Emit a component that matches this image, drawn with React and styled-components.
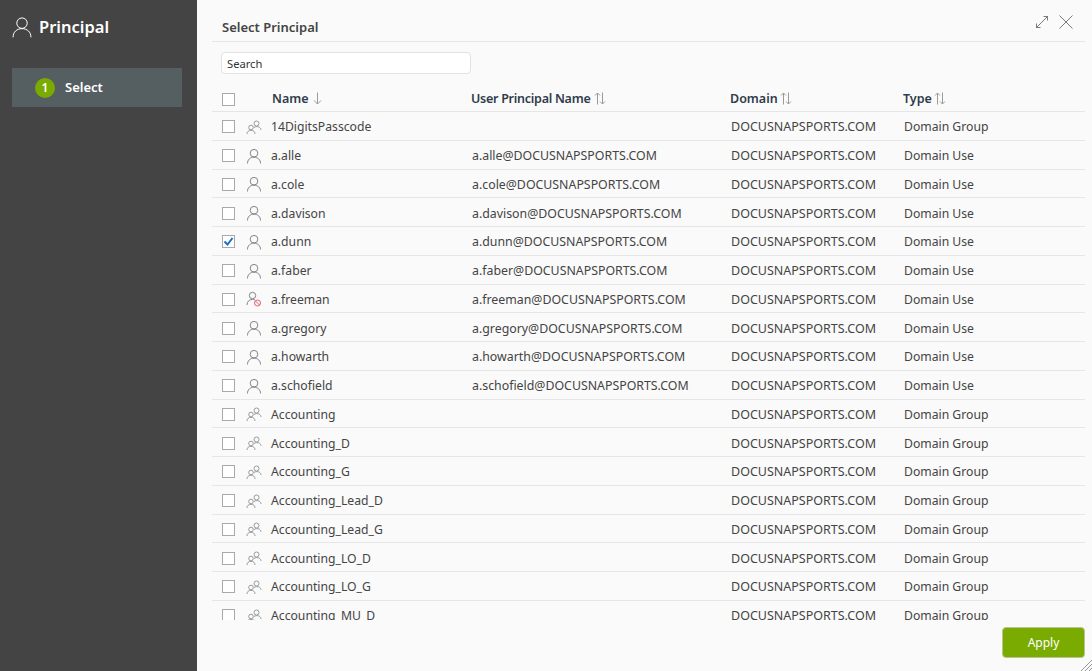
import React from "react";
import styled, { createGlobalStyle } from "styled-components";

const GlobalStyle = createGlobalStyle`
    html, body {
        margin: 0;
        padding: 0;
        height: 100%;
        overflow: hidden;
    }

    body {
        font-family: "Noto Sans", "Open Sans", sans-serif;
        font-size: 12px;
        color: #444444;
    }
`;

const user = (name, upn) => ({ name, upn, type: "Domain Use", kind: "user" });
const group = (name) => ({ name, upn: "", type: "Domain Group", kind: "group" });

const principals = [
    group("14DigitsPasscode"),
    user("a.alle", "a.alle@DOCUSNAPSPORTS.COM"),
    user("a.cole", "a.cole@DOCUSNAPSPORTS.COM"),
    user("a.davison", "a.davison@DOCUSNAPSPORTS.COM"),
    { ...user("a.dunn", "a.dunn@DOCUSNAPSPORTS.COM"), checked: true },
    user("a.faber", "a.faber@DOCUSNAPSPORTS.COM"),
    { ...user("a.freeman", "a.freeman@DOCUSNAPSPORTS.COM"), kind: "disabled" },
    user("a.gregory", "a.gregory@DOCUSNAPSPORTS.COM"),
    user("a.howarth", "a.howarth@DOCUSNAPSPORTS.COM"),
    user("a.schofield", "a.schofield@DOCUSNAPSPORTS.COM"),
    group("Accounting"),
    group("Accounting_D"),
    group("Accounting_G"),
    group("Accounting_Lead_D"),
    group("Accounting_Lead_G"),
    group("Accounting_LO_D"),
    group("Accounting_LO_G"),
    group("Accounting_MU_D"),
];

const Page = styled.div`
    display: flex;
    height: 100vh;
`;

const Sidebar = styled.aside`
    width: 197px;
    flex-shrink: 0;
    background: #444444;
    color: #ffffff;
    padding: 0 15px 0 12px;
    box-sizing: border-box;
`;

const SideTitle = styled.div`
    display: flex;
    align-items: center;
    gap: 6px;
    height: 54px;
    margin-bottom: 14px;
    font-size: 16.5px;
    font-weight: 600;
`;

const TitleText = styled.span`
    position: relative;
    top: -1px;
`;

const Step = styled.div`
    display: flex;
    align-items: center;
    gap: 10px;
    height: 39px;
    padding-left: 23px;
    padding-bottom: 1px;
    box-sizing: border-box;
    background: #555e61;
    font-size: 13px;
    font-weight: 600;
`;

const StepNumber = styled.span`
    display: flex;
    align-items: center;
    justify-content: center;
    width: 20px;
    height: 20px;
    margin-top: 1px;
    border-radius: 50%;
    background: #7aab00;
    font-size: 12px;
`;

const Main = styled.main`
    position: relative;
    flex: 1;
    display: flex;
    flex-direction: column;
    min-width: 0;
    padding: 0 7px 0 15px;
    background: #fafafa;
`;

const Header = styled.header`
    display: flex;
    align-items: center;
    justify-content: space-between;
    flex-shrink: 0;
    height: 41px;
    padding: 0 12px 0 10px;
    border-bottom: 1px solid #e6e6e6;
    color: #444444;
    font-size: 13px;
    font-weight: 600;
`;

const HeaderTitle = styled.span`
    padding-top: 13px;
`;

const HeaderActions = styled.div`
    display: flex;
    align-items: center;
    gap: 10px;
    margin-bottom: -3px;
    color: #7a7a7a;
`;

const Search = styled.input`
    flex-shrink: 0;
    box-sizing: border-box;
    width: 250px;
    height: 22px;
    margin: 10px 0 11px 9px;
    padding: 0 5px;
    border: 1px solid #e2e2e2;
    border-radius: 4px;
    background: #ffffff;
    font: inherit;
    font-size: 11.2px;
    color: #333333;
    outline: none;

    &::placeholder {
        color: #333333;
        opacity: 1;
    }
`;

const HeadRow = styled.div`
    display: grid;
    grid-template-columns: 50px 199px 259px 173px 1fr;
    align-items: center;
    flex-shrink: 0;
    height: 27px;
    padding: 1px 0 0 10px;
    border-bottom: 1px solid #e6e6e6;
    box-sizing: border-box;
    color: #2f3c4a;
    font-size: 12.5px;
    font-weight: 600;
`;

const HeadCell = styled.span`
    display: flex;
    align-items: center;
    gap: ${(props) => (props.$tight ? 4 : 2)}px;
    letter-spacing: ${(props) => (props.$tight ? "-0.26px" : "normal")};
`;

const HeadBox = styled.span`
    display: flex;
    padding-top: 1px;
`;

const Rows = styled.div`
    height: 508px;
    flex-shrink: 0;
    overflow: hidden;
`;

const Row = styled.div`
    display: grid;
    grid-template-columns: 24px 25px 201px 259px 173px 1fr;
    align-items: center;
    height: 28.75px;
    padding: 2px 0 0 10px;
    box-sizing: border-box;
    border-bottom: 1px solid #e6e6e6;
`;

const Cell = styled.span`
    font-size: ${(props) => props.$size || 12.2}px;
    white-space: nowrap;
`;

const Box = styled.span`
    display: flex;
    align-items: center;
    justify-content: center;
    box-sizing: border-box;
    width: 13px;
    height: 13px;
    border: 1px solid #a9a9a9;
    background: #ffffff;
    color: #1d6fc0;
`;

const IconWrap = styled.span`
    display: flex;
    color: #858585;
`;

const TitleIcon = styled.span`
    display: flex;
    margin-left: -1px;
    margin-bottom: 1px;
`;

const Footer = styled.footer`
    display: flex;
    justify-content: flex-end;
    padding-top: 7px;
`;

const ApplyButton = styled.button`
    width: 83px;
    height: 31px;
    border: 1px solid #b9c58f;
    border-radius: 4px;
    background: #7aab00;
    color: #ffffff;
    font: inherit;
    font-size: 12px;
`;

const Grip = styled.svg`
    position: absolute;
    right: 0;
    bottom: 0;
    color: #9a9a9a;
`;

const PersonIcon = ({ size = 16 }) => (
    <svg width={size} height={size} viewBox="0 0 16 16" fill="none" stroke="currentColor" strokeWidth={16 / size}>
        <circle cx="8" cy="5.2" r="3.8" />
        <path d="M1.500 15.500c0-3.800 2.600-6.300 6.500-6.300s6.500 2.500 6.500 6.300" />
    </svg>
);

const RowIcon = ({ kind }) => {
    if (kind === "group") {
        return (
            <svg width="16" height="16" viewBox="0 0 16 16" fill="none" stroke="#9a9a9a" strokeWidth="1">
                <circle cx="10.500" cy="4.500" r="2.500" />
                <path d="M8 8.500c1-1 4-1.300 5.500-.2 1 .7 1.500 1.700 1.500 2.700" />
                <circle cx="5" cy="8.500" r="2.300" />
                <path d="M1 15c0-2.400 1.600-3.700 4-3.700s4 1.300 4 3.700" />
            </svg>
        );
    }
    if (kind === "disabled") {
        return (
            <svg width="16" height="16" viewBox="0 0 16 16" fill="none" strokeWidth="1">
                <g stroke="#858585">
                    <circle cx="6.500" cy="4.500" r="3.200" />
                    <path d="M1 14c0-3.300 2.200-5.600 5.500-5.600 1 0 1.800.2 2.500.6" />
                </g>
                <g stroke="#e0606a">
                    <circle cx="11.500" cy="12" r="3" />
                    <path d="M9.500 10l4 4" />
                </g>
            </svg>
        );
    }
    return (
        <IconWrap>
            <PersonIcon />
        </IconWrap>
    );
};

const SortDown = () => (
    <svg width="9" height="13" viewBox="0 0 9 13" fill="none" stroke="#9a9a9a" strokeWidth="1" style={{ marginLeft: 2 }}>
        <path d="M4.500 0.500v11.500M1 8.500l3.500 3.500 3.500-3.500" />
    </svg>
);

const SortBoth = () => (
    <svg width="12" height="13" viewBox="0 0 12 13" fill="none" stroke="#9a9a9a" strokeWidth="1">
        <path d="M3.500 12.500V1M1 3.500L3.500 1 6 3.500M8.500 .500V12M6 9.500L8.500 12 11 9.500" />
    </svg>
);

export default function App() {
    return (
        <Page>
            <GlobalStyle />
            <Sidebar>
                <SideTitle>
                    <TitleIcon>
                        <PersonIcon size={22} />
                    </TitleIcon>
                    <TitleText>Principal</TitleText>
                </SideTitle>
                <Step>
                    <StepNumber>1</StepNumber>
                    Select
                </Step>
            </Sidebar>
            <Main>
                <Header>
                    <HeaderTitle>Select Principal</HeaderTitle>
                    <HeaderActions>
                        <svg width="14" height="14" viewBox="0 0 14 14" fill="none" stroke="currentColor" strokeWidth="1">
                            <path d="M1 13L13 1M8.500 1.500H12.500V5.500M1.500 8.500V12.500H5.500" />
                        </svg>
                        <svg width="14" height="14" viewBox="0 0 14 14" fill="none" stroke="currentColor" strokeWidth="1">
                            <path d="M.5 .5l13 13M13.500 .5l-13 13" />
                        </svg>
                    </HeaderActions>
                </Header>
                <Search placeholder="Search" />
                <HeadRow>
                    <HeadBox>
                        <Box />
                    </HeadBox>
                    <HeadCell>Name <SortDown /></HeadCell>
                    <HeadCell $tight>User Principal Name <SortBoth /></HeadCell>
                    <HeadCell>Domain <SortBoth /></HeadCell>
                    <HeadCell>Type <SortBoth /></HeadCell>
                </HeadRow>
                <Rows>
                    {principals.map((item) => (
                        <Row key={item.name}>
                            <Box>
                                {item.checked && (
                                    <svg width="11" height="11" viewBox="0 0 11 11" fill="none" stroke="currentColor" strokeWidth="2">
                                        <path d="M1.500 5.500l3 3 5-6.500" />
                                    </svg>
                                )}
                            </Box>
                            <RowIcon kind={item.kind} />
                            <Cell>{item.name}</Cell>
                            <Cell $size={12.35}>{item.upn}</Cell>
                            <Cell $size={12.5}>DOCUSNAPSPORTS.COM</Cell>
                            <Cell>{item.type}</Cell>
                        </Row>
                    ))}
                </Rows>
                <Footer>
                    <ApplyButton>Apply</ApplyButton>
                </Footer>
                <Grip width="12" height="12" viewBox="0 0 12 12" fill="none" stroke="currentColor" strokeWidth="1">
                    <path d="M12 1L1 12M12 5L5 12M12 9L9 12" />
                </Grip>
            </Main>
        </Page>
    );
}
